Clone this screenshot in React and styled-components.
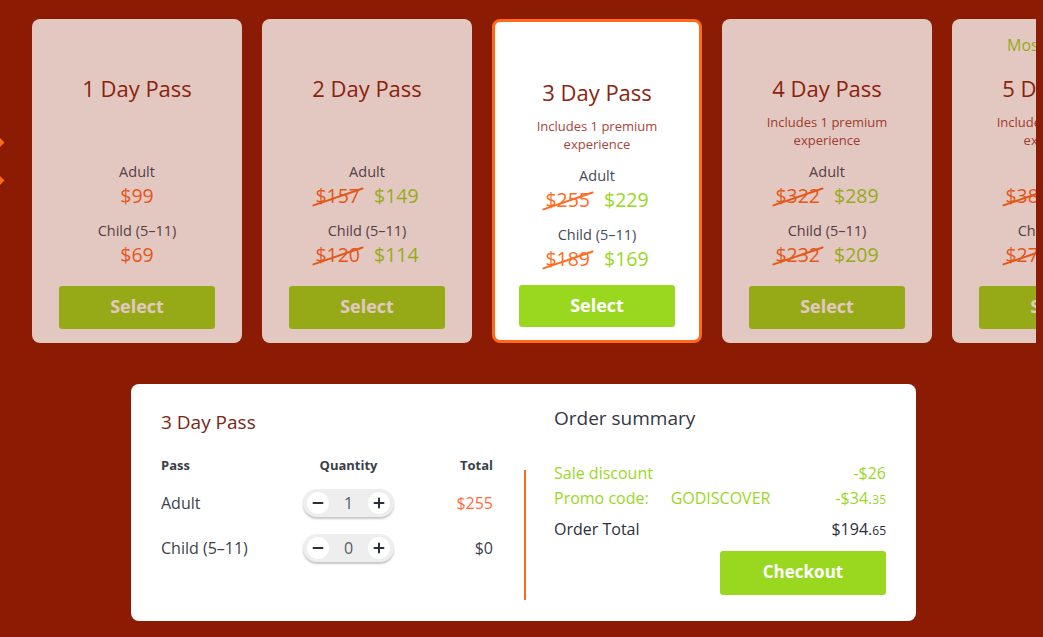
import React from "react";
import styled, { createGlobalStyle, css } from "styled-components";

const Global = createGlobalStyle`
  html, body { margin: 0; padding: 0; }
  body {
    background: #8b1b03;
    font-family: "Open Sans", "Noto Sans", sans-serif;
    width: 1043px;
    height: 637px;
    overflow: hidden;
  }
`;

const Page = styled.div`
  position: relative;
  width: 1043px;
  height: 637px;
  box-sizing: border-box;
  padding-top: 19px;
  display: flex;
  flex-direction: column;
  align-items: center;
`;

const Diamond = styled.span`
  position: absolute;
  left: -4px;
  top: ${(p) => p.$top}px;
  width: 7px;
  height: 7px;
  background: #ff6a1a;
  transform: rotate(45deg);
`;

const Carousel = styled.div`
  align-self: flex-start;
  width: 1036px;
  overflow: hidden;
  display: flex;
  gap: 20px;
  padding-left: 32px;
  box-sizing: border-box;
`;

const Card = styled.div`
  flex: 0 0 210px;
  height: 324px;
  box-sizing: border-box;
  border-radius: 8px;
  background: #ffffff;
  padding: 14px 27px 14px;
  display: flex;
  flex-direction: column;
  align-items: center;
  text-align: center;
  opacity: 0.76;
  ${(p) =>
    p.$selected &&
    css`
      opacity: 1;
      border: 3px solid #ff6a1a;
      padding: 15px 24px 13px;
    `}
`;

const Badge = styled.div`
  height: 24px;
  line-height: 24px;
  font-size: 16px;
  color: #9ad81f;
  white-space: nowrap;
`;

const Title = styled.div`
  margin-top: 16px;
  font-size: 22px;
  line-height: 30px;
  color: #8b2510;
  white-space: nowrap;
`;

const Subtitle = styled.div`
  margin-top: 10px;
  font-size: 13px;
  line-height: 18px;
  color: #a8463a;
  max-width: 150px;
`;

const Pricing = styled.div`
  margin-top: auto;
  display: flex;
  flex-direction: column;
  align-items: center;
`;

const Label = styled.div`
  font-size: 14.5px;
  line-height: 20px;
  color: #444b59;
  white-space: nowrap;
  margin-top: ${(p) => (p.$first ? 0 : 13)}px;
`;

const PriceRow = styled.div`
  margin-top: 2px;
  display: flex;
  gap: 14px;
  font-size: 19.5px;
  line-height: 24px;
`;

const OldPrice = styled.span`
  position: relative;
  color: #ff6b1f;
  &::after {
    content: "";
    position: absolute;
    left: -4px;
    right: -5px;
    top: 50%;
    height: 2px;
    background: #ff6b1f;
    border-radius: 1px;
    transform: rotate(-19deg);
  }
`;

const NewPrice = styled.span`
  color: ${(p) => (p.$single ? "#ff6b1f" : "#9ad81f")};
`;

const SelectButton = styled.button`
  margin-top: ${(p) => (p.$selected ? 14 : 19)}px;
  width: 156px;
  height: ${(p) => (p.$selected ? 42 : 43)}px;
  flex: 0 0 auto;
  border: none;
  border-radius: 3px;
  background: #9ad81f;
  color: #ffffff;
  font-family: inherit;
  font-weight: 700;
  font-size: 18px;
  line-height: 1;
  padding: 0 0 3px;
  cursor: pointer;
`;

const Panel = styled.div`
  margin-top: 41px;
  margin-left: 4px;
  width: 785px;
  height: 237px;
  box-sizing: border-box;
  background: #ffffff;
  border-radius: 8px;
  padding: 24px 30px 21px;
  display: grid;
  grid-template-columns: 332px 1px 332px;
  column-gap: 30px;
`;

const Column = styled.div`
  display: flex;
  flex-direction: column;
`;

const PanelTitle = styled.div`
  font-size: 19px;
  line-height: 26px;
  color: ${(p) => p.$color};
  margin-top: ${(p) => p.$offset || 0}px;
`;

const Table = styled.div`
  margin-top: 20px;
  display: grid;
  grid-template-columns: 142px 91px 1fr;
  align-items: center;
`;

const HeadCell = styled.div`
  font-size: 13px;
  font-weight: 700;
  line-height: 20px;
  color: #3a3f4a;
  text-align: ${(p) => p.$align || "left"};
  white-space: nowrap;
  margin-bottom: 5px;
`;

const Cell = styled.div`
  height: 45px;
  display: flex;
  align-items: center;
  justify-content: ${(p) => p.$justify || "flex-start"};
  font-size: 16px;
  color: ${(p) => p.$color || "#3a3f4a"};
  white-space: nowrap;
`;

const Stepper = styled.div`
  width: 91px;
  height: 28px;
  box-sizing: border-box;
  border-radius: 14px;
  background: #eeeeee;
  box-shadow: 0 2px 2px rgba(0, 0, 0, 0.22);
  padding: 0 4px;
  display: flex;
  align-items: center;
  justify-content: space-between;
`;

const StepBtn = styled.span`
  width: 22px;
  height: 22px;
  border-radius: 50%;
  background: #ffffff;
  display: flex;
  align-items: center;
  justify-content: center;
  color: #2b2f3a;
`;

const StepValue = styled.span`
  font-size: 16px;
  color: #555a66;
`;

const Divider = styled.div`
  margin-top: 62px;
  margin-left: 1px;
  width: 2px;
  background-color: rgb(255, 106, 26);
`;

const SummaryRows = styled.div`
  margin-top: 30px;
  display: flex;
  flex-direction: column;
`;

const SumRow = styled.div`
  display: flex;
  align-items: baseline;
  font-size: 16px;
  line-height: 25px;
  color: ${(p) => p.$color};
  margin-top: ${(p) => p.$gap || 0}px;
`;

const Code = styled.span`
  margin-left: 22px;
`;

const Amount = styled.span`
  margin-left: auto;
`;

const Cents = styled.span`
  font-size: 12px;
`;

const Checkout = styled.button`
  align-self: flex-end;
  margin-top: 8px;
  width: 166px;
  height: 44px;
  border: none;
  border-radius: 3px;
  background: #9ad81f;
  color: #ffffff;
  font-family: inherit;
  font-weight: 700;
  font-size: 17px;
  padding: 0 0 3px;
`;

const Minus = () => (
  <svg width="12" height="12" viewBox="0 0 12 12">
    <path d="M1.5 6h9" stroke="currentColor" strokeWidth="2" strokeLinecap="round" />
  </svg>
);
const Plus = () => (
  <svg width="12" height="12" viewBox="0 0 12 12">
    <path d="M1.5 6h9M6 1.5v9" stroke="currentColor" strokeWidth="2" strokeLinecap="round" />
  </svg>
);

const passes = [
  { title: "1 Day Pass", adult: [null, 99], child: [null, 69] },
  { title: "2 Day Pass", adult: [157, 149], child: [120, 114] },
  { title: "3 Day Pass", sub: true, adult: [255, 229], child: [189, 169], selected: true },
  { title: "4 Day Pass", sub: true, adult: [322, 289], child: [232, 209] },
  { title: "5 Day Pass", badge: "Most popular", sub: true, adult: [389, 349], child: [279, 249] },
];

const Price = ({ value }) => (
  <PriceRow>
    {value[0] != null && <OldPrice>${value[0]}</OldPrice>}
    <NewPrice $single={value[0] == null}>${value[1]}</NewPrice>
  </PriceRow>
);

const Counter = ({ value }) => (
  <Stepper>
    <StepBtn><Minus /></StepBtn>
    <StepValue>{value}</StepValue>
    <StepBtn><Plus /></StepBtn>
  </Stepper>
);

export default function App() {
  return (
    <Page>
      <Global />
      <Diamond $top={139} />
      <Diamond $top={177} />
      <Carousel>
        {passes.map((p) => (
          <Card key={p.title} $selected={p.selected}>
            <Badge>{p.badge || ""}</Badge>
            <Title>{p.title}</Title>
            {p.sub && <Subtitle>Includes 1 premium experience</Subtitle>}
            <Pricing>
              <Label $first>Adult</Label>
              <Price value={p.adult} />
              <Label>Child (5–11)</Label>
              <Price value={p.child} />
            </Pricing>
            <SelectButton $selected={p.selected}>Select</SelectButton>
          </Card>
        ))}
      </Carousel>

      <Panel>
        <Column>
          <PanelTitle $color="#7d2412" $offset={1}>3 Day Pass</PanelTitle>
          <Table>
            <HeadCell>Pass</HeadCell>
            <HeadCell $align="center">Quantity</HeadCell>
            <HeadCell $align="right">Total</HeadCell>
            <Cell>Adult</Cell>
            <Cell $justify="center"><Counter value={1} /></Cell>
            <Cell $justify="flex-end" $color="#ff6b3d">$255</Cell>
            <Cell>Child (5–11)</Cell>
            <Cell $justify="center"><Counter value={0} /></Cell>
            <Cell $justify="flex-end">$0</Cell>
          </Table>
        </Column>
        <Divider />
        <Column>
          <PanelTitle $color="#333843" $offset={-3}>Order summary</PanelTitle>
          <SummaryRows>
            <SumRow $color="#9ad81f">
              <span>Sale discount</span>
              <Amount>-$26</Amount>
            </SumRow>
            <SumRow $color="#9ad81f">
              <span>Promo code:</span>
              <Code>GODISCOVER</Code>
              <Amount>-$34.<Cents>35</Cents></Amount>
            </SumRow>
            <SumRow $color="#2b2f3a" $gap={5}>
              <span>Order Total</span>
              <Amount>$194.<Cents>65</Cents></Amount>
            </SumRow>
          </SummaryRows>
          <Checkout>Checkout</Checkout>
        </Column>
      </Panel>
    </Page>
  );
}
